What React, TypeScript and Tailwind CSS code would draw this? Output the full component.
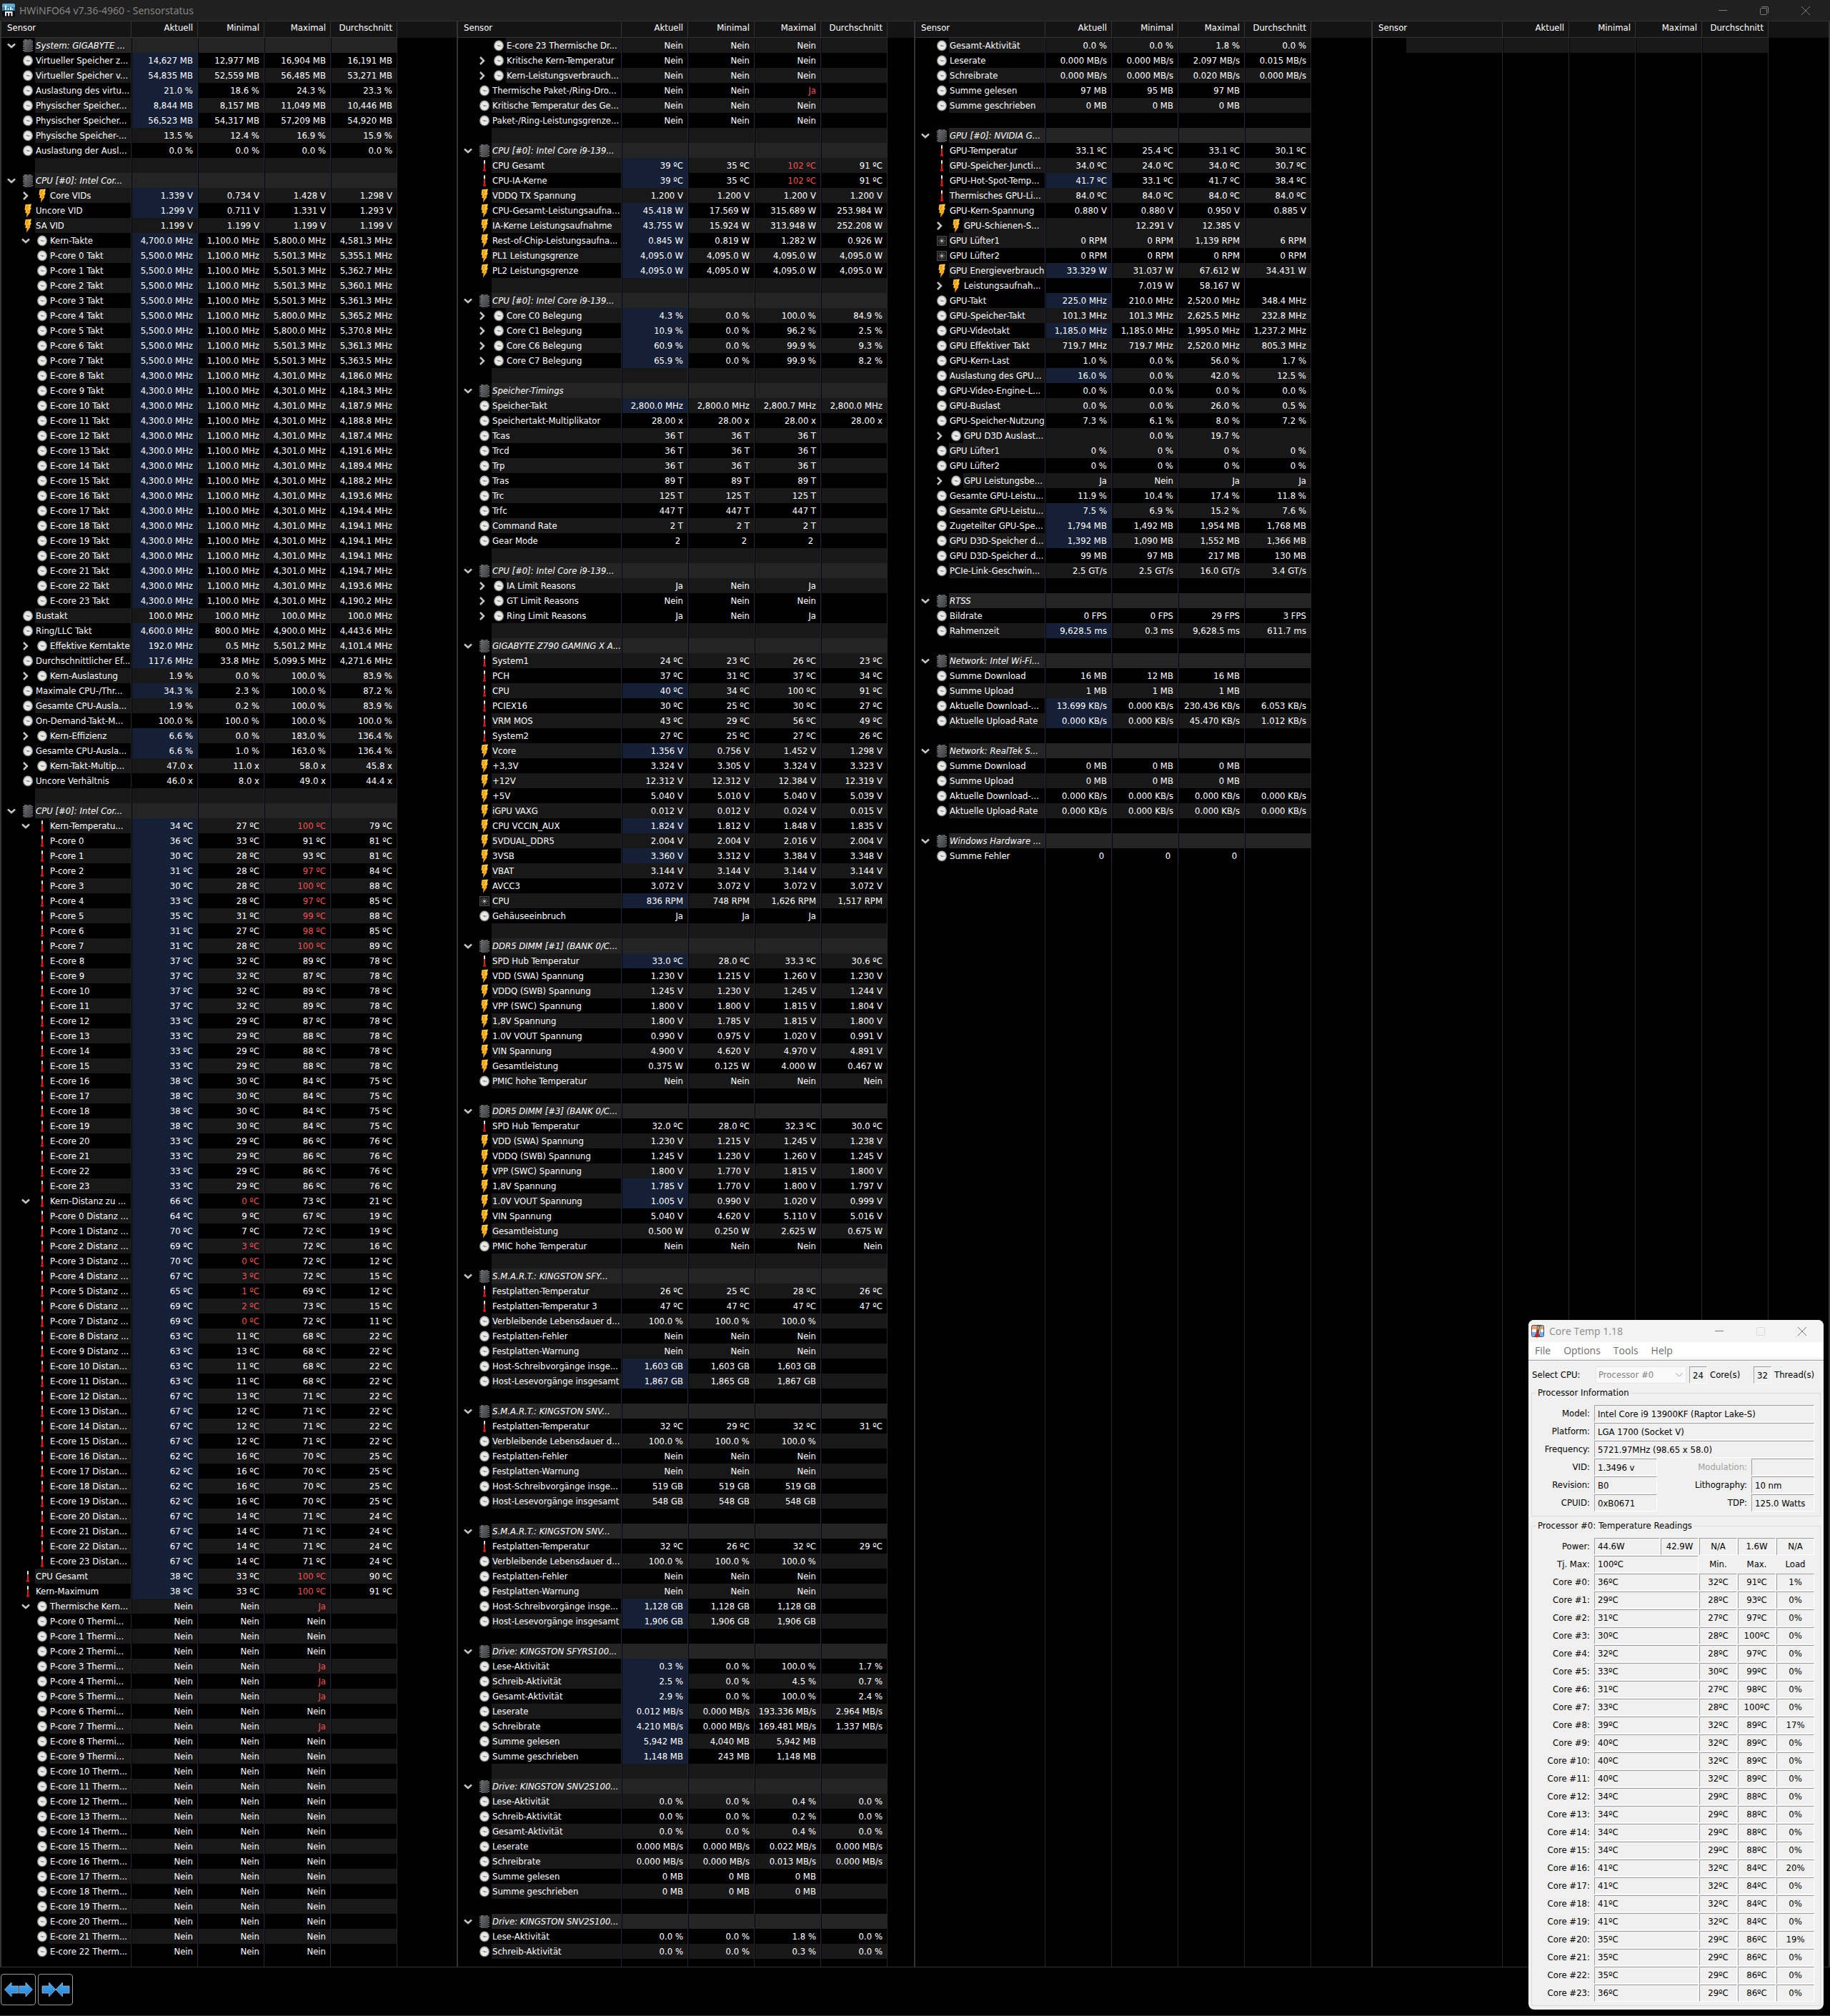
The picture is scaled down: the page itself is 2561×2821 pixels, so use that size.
import React from 'react';
import clsx from 'clsx';

type Kind = 'S' | 'C' | 'B' | 'T' | 'F';

interface Row {
  kind?: Kind;
  nested: boolean;
  expander?: 'open' | 'closed';
  label: string;
  values: string[];
  hot: boolean;
  shaded: boolean;
}

// One sensor per line: code | label | current | min | max | avg
// code: S section, C clock, B voltage/power, T temperature, F fan
//       1 = child, v = expanded child, > = collapsed child, = keeps the shade of the row above
// values: * marks a reading that just changed, ! a critical one
const COL_1 = `
S|System: GIGABYTE ...
C|Virtueller Speicher z...|*14,627 MB|12,977 MB|16,904 MB|16,191 MB
C|Virtueller Speicher v...|*54,835 MB|52,559 MB|56,485 MB|53,271 MB
C|Auslastung des virtu...|*21.0 %|18.6 %|24.3 %|23.3 %
C|Physischer Speicher...|*8,844 MB|8,157 MB|11,049 MB|10,446 MB
C|Physischer Speicher...|*56,523 MB|54,317 MB|57,209 MB|54,920 MB
C|Physische Speicher-...|13.5 %|12.4 %|16.9 %|15.9 %
C|Auslastung der Ausl...|0.0 %|0.0 %|0.0 %|0.0 %
-
S|CPU [#0]: Intel Cor...
>B|Core VIDs|*1.339 V|0.734 V|1.428 V|1.298 V
B|Uncore VID|*1.299 V|0.711 V|1.331 V|1.293 V
B|SA VID|1.199 V|1.199 V|1.199 V|1.199 V
vC|Kern-Takte|*4,700.0 MHz|1,100.0 MHz|5,800.0 MHz|4,581.3 MHz
1C|P-core 0 Takt|*5,500.0 MHz|1,100.0 MHz|5,501.3 MHz|5,355.1 MHz
1C|P-core 1 Takt|*5,500.0 MHz|1,100.0 MHz|5,501.3 MHz|5,362.7 MHz
1C|P-core 2 Takt|*5,500.0 MHz|1,100.0 MHz|5,501.3 MHz|5,360.1 MHz
1C|P-core 3 Takt|*5,500.0 MHz|1,100.0 MHz|5,501.3 MHz|5,361.3 MHz
1C|P-core 4 Takt|*5,500.0 MHz|1,100.0 MHz|5,800.0 MHz|5,365.2 MHz
1C|P-core 5 Takt|*5,500.0 MHz|1,100.0 MHz|5,800.0 MHz|5,370.8 MHz
1C|P-core 6 Takt|*5,500.0 MHz|1,100.0 MHz|5,501.3 MHz|5,361.3 MHz
1C|P-core 7 Takt|*5,500.0 MHz|1,100.0 MHz|5,501.3 MHz|5,363.5 MHz
1C|E-core 8 Takt|*4,300.0 MHz|1,100.0 MHz|4,301.0 MHz|4,186.0 MHz
1C|E-core 9 Takt|*4,300.0 MHz|1,100.0 MHz|4,301.0 MHz|4,184.3 MHz
1C|E-core 10 Takt|*4,300.0 MHz|1,100.0 MHz|4,301.0 MHz|4,187.9 MHz
1C|E-core 11 Takt|*4,300.0 MHz|1,100.0 MHz|4,301.0 MHz|4,188.8 MHz
1C|E-core 12 Takt|*4,300.0 MHz|1,100.0 MHz|4,301.0 MHz|4,187.4 MHz
1C|E-core 13 Takt|*4,300.0 MHz|1,100.0 MHz|4,301.0 MHz|4,191.6 MHz
1C|E-core 14 Takt|*4,300.0 MHz|1,100.0 MHz|4,301.0 MHz|4,189.4 MHz
1C|E-core 15 Takt|*4,300.0 MHz|1,100.0 MHz|4,301.0 MHz|4,188.2 MHz
1C|E-core 16 Takt|*4,300.0 MHz|1,100.0 MHz|4,301.0 MHz|4,193.6 MHz
1C|E-core 17 Takt|*4,300.0 MHz|1,100.0 MHz|4,301.0 MHz|4,194.4 MHz
1C|E-core 18 Takt|*4,300.0 MHz|1,100.0 MHz|4,301.0 MHz|4,194.1 MHz
1C|E-core 19 Takt|*4,300.0 MHz|1,100.0 MHz|4,301.0 MHz|4,194.1 MHz
1C|E-core 20 Takt|*4,300.0 MHz|1,100.0 MHz|4,301.0 MHz|4,194.1 MHz
1C|E-core 21 Takt|*4,300.0 MHz|1,100.0 MHz|4,301.0 MHz|4,194.7 MHz
1C|E-core 22 Takt|*4,300.0 MHz|1,100.0 MHz|4,301.0 MHz|4,193.6 MHz
1C|E-core 23 Takt|*4,300.0 MHz|1,100.0 MHz|4,301.0 MHz|4,190.2 MHz
C|Bustakt|100.0 MHz|100.0 MHz|100.0 MHz|100.0 MHz
C|Ring/LLC Takt|*4,600.0 MHz|800.0 MHz|4,900.0 MHz|4,443.6 MHz
>C|Effektive Kerntakte|*192.0 MHz|0.5 MHz|5,501.2 MHz|4,101.4 MHz
C|Durchschnittlicher Ef...|*117.6 MHz|33.8 MHz|5,099.5 MHz|4,271.6 MHz
>C|Kern-Auslastung|1.9 %|0.0 %|100.0 %|83.9 %
C|Maximale CPU-/Thr...|*34.3 %|2.3 %|100.0 %|87.2 %
C|Gesamte CPU-Ausla...|1.9 %|0.2 %|100.0 %|83.9 %
C|On-Demand-Takt-M...|100.0 %|100.0 %|100.0 %|100.0 %
>C|Kern-Effizienz|*6.6 %|0.0 %|183.0 %|136.4 %
C|Gesamte CPU-Ausla...|*6.6 %|1.0 %|163.0 %|136.4 %
>C|Kern-Takt-Multip...|47.0 x|11.0 x|58.0 x|45.8 x
C|Uncore Verhältnis|46.0 x|8.0 x|49.0 x|44.4 x
-
S|CPU [#0]: Intel Cor...
vT|Kern-Temperatu...|*34 ºC|27 ºC|!100 ºC|79 ºC
1T|P-core 0|*36 ºC|33 ºC|91 ºC|81 ºC
1T|P-core 1|*30 ºC|28 ºC|93 ºC|81 ºC
1T|P-core 2|*31 ºC|28 ºC|!97 ºC|84 ºC
1T|P-core 3|*30 ºC|28 ºC|!100 ºC|88 ºC
1T|P-core 4|*33 ºC|28 ºC|!97 ºC|85 ºC
1T|P-core 5|*35 ºC|31 ºC|!99 ºC|88 ºC
1T|P-core 6|*31 ºC|27 ºC|!98 ºC|85 ºC
1T|P-core 7|*31 ºC|28 ºC|!100 ºC|89 ºC
1T|E-core 8|*37 ºC|32 ºC|89 ºC|78 ºC
1T|E-core 9|*37 ºC|32 ºC|87 ºC|78 ºC
1T|E-core 10|*37 ºC|32 ºC|89 ºC|78 ºC
1T|E-core 11|*37 ºC|32 ºC|89 ºC|78 ºC
1T|E-core 12|*33 ºC|29 ºC|87 ºC|78 ºC
1T|E-core 13|*33 ºC|29 ºC|88 ºC|78 ºC
1T|E-core 14|*33 ºC|29 ºC|88 ºC|78 ºC
1T|E-core 15|*33 ºC|29 ºC|88 ºC|78 ºC
1T|E-core 16|*38 ºC|30 ºC|84 ºC|75 ºC
1T|E-core 17|*38 ºC|30 ºC|84 ºC|75 ºC
1T|E-core 18|*38 ºC|30 ºC|84 ºC|75 ºC
1T|E-core 19|*38 ºC|30 ºC|84 ºC|75 ºC
1T|E-core 20|*33 ºC|29 ºC|86 ºC|76 ºC
1T|E-core 21|*33 ºC|29 ºC|86 ºC|76 ºC
1T|E-core 22|*33 ºC|29 ºC|86 ºC|76 ºC
1T|E-core 23|*33 ºC|29 ºC|86 ºC|76 ºC
vT|Kern-Distanz zu ...|*66 ºC|!0 ºC|73 ºC|21 ºC
1T|P-core 0 Distanz ...|*64 ºC|9 ºC|67 ºC|19 ºC
1T|P-core 1 Distanz ...|*70 ºC|7 ºC|72 ºC|19 ºC
1T|P-core 2 Distanz ...|*69 ºC|!3 ºC|72 ºC|16 ºC
1T|P-core 3 Distanz ...|*70 ºC|!0 ºC|72 ºC|12 ºC
1T|P-core 4 Distanz ...|*67 ºC|!3 ºC|72 ºC|15 ºC
1T|P-core 5 Distanz ...|*65 ºC|!1 ºC|69 ºC|12 ºC
1T|P-core 6 Distanz ...|*69 ºC|!2 ºC|73 ºC|15 ºC
1T|P-core 7 Distanz ...|*69 ºC|!0 ºC|72 ºC|11 ºC
1T|E-core 8 Distanz ...|*63 ºC|11 ºC|68 ºC|22 ºC
1T|E-core 9 Distanz ...|*63 ºC|13 ºC|68 ºC|22 ºC
1T|E-core 10 Distan...|*63 ºC|11 ºC|68 ºC|22 ºC
1T|E-core 11 Distan...|*63 ºC|11 ºC|68 ºC|22 ºC
1T|E-core 12 Distan...|*67 ºC|13 ºC|71 ºC|22 ºC
1T|E-core 13 Distan...|*67 ºC|12 ºC|71 ºC|22 ºC
1T|E-core 14 Distan...|*67 ºC|12 ºC|71 ºC|22 ºC
1T|E-core 15 Distan...|*67 ºC|12 ºC|71 ºC|22 ºC
1T|E-core 16 Distan...|*62 ºC|16 ºC|70 ºC|25 ºC
1T|E-core 17 Distan...|*62 ºC|16 ºC|70 ºC|25 ºC
1T|E-core 18 Distan...|*62 ºC|16 ºC|70 ºC|25 ºC
1T|E-core 19 Distan...|*62 ºC|16 ºC|70 ºC|25 ºC
1T|E-core 20 Distan...|*67 ºC|14 ºC|71 ºC|24 ºC
1T|E-core 21 Distan...|*67 ºC|14 ºC|71 ºC|24 ºC
1T|E-core 22 Distan...|*67 ºC|14 ºC|71 ºC|24 ºC
1T|E-core 23 Distan...|*67 ºC|14 ºC|71 ºC|24 ºC
T|CPU Gesamt|*38 ºC|33 ºC|!100 ºC|90 ºC
T|Kern-Maximum|*38 ºC|33 ºC|!100 ºC|91 ºC
vC|Thermische Kern...|Nein|Nein|!Ja
1C|P-core 0 Thermi...|Nein|Nein|Nein
1C|P-core 1 Thermi...|Nein|Nein|Nein
1C|P-core 2 Thermi...|Nein|Nein|Nein
1C|P-core 3 Thermi...|Nein|Nein|!Ja
1C|P-core 4 Thermi...|Nein|Nein|!Ja
1C|P-core 5 Thermi...|Nein|Nein|!Ja
1C|P-core 6 Thermi...|Nein|Nein|Nein
1C|P-core 7 Thermi...|Nein|Nein|!Ja
1C|E-core 8 Thermi...|Nein|Nein|Nein
1C|E-core 9 Thermi...|Nein|Nein|Nein
1C|E-core 10 Therm...|Nein|Nein|Nein
1C|E-core 11 Therm...|Nein|Nein|Nein
1C|E-core 12 Therm...|Nein|Nein|Nein
1C|E-core 13 Therm...|Nein|Nein|Nein
1C|E-core 14 Therm...|Nein|Nein|Nein
1C|E-core 15 Therm...|Nein|Nein|Nein
1C|E-core 16 Therm...|Nein|Nein|Nein
1C|E-core 17 Therm...|Nein|Nein|Nein
1C|E-core 18 Therm...|Nein|Nein|Nein
1C|E-core 19 Therm...|Nein|Nein|Nein
1C|E-core 20 Therm...|Nein|Nein|Nein
1C|E-core 21 Therm...|Nein|Nein|Nein
1C|E-core 22 Therm...|Nein|Nein|Nein
`;

const COL_2 = `
1C|E-core 23 Thermische Dr...|Nein|Nein|Nein
>C|Kritische Kern-Temperatur|Nein|Nein|Nein
>C|Kern-Leistungsverbrauch...|Nein|Nein|Nein
C|Thermische Paket-/Ring-Dro...|Nein|Nein|!Ja
C|Kritische Temperatur des Ge...|Nein|Nein|Nein
C|Paket-/Ring-Leistungsgrenze...|Nein|Nein|Nein
-
S|CPU [#0]: Intel Core i9-139...
T|CPU Gesamt|*39 ºC|35 ºC|!102 ºC|91 ºC
T|CPU-IA-Kerne|*39 ºC|35 ºC|!102 ºC|91 ºC
B|VDDQ TX Spannung|1.200 V|1.200 V|1.200 V|1.200 V
B|CPU-Gesamt-Leistungsaufna...|*45.418 W|17.569 W|315.689 W|253.984 W
B|IA-Kerne Leistungsaufnahme|*43.755 W|15.924 W|313.948 W|252.208 W
B|Rest-of-Chip-Leistungsaufna...|*0.845 W|0.819 W|1.282 W|0.926 W
B|PL1 Leistungsgrenze|*4,095.0 W|4,095.0 W|4,095.0 W|4,095.0 W
B|PL2 Leistungsgrenze|*4,095.0 W|4,095.0 W|4,095.0 W|4,095.0 W
-
S|CPU [#0]: Intel Core i9-139...
>C|Core C0 Belegung|*4.3 %|0.0 %|100.0 %|84.9 %
>C|Core C1 Belegung|*10.9 %|0.0 %|96.2 %|2.5 %
>C|Core C6 Belegung|*60.9 %|0.0 %|99.9 %|9.3 %
>C|Core C7 Belegung|*65.9 %|0.0 %|99.9 %|8.2 %
-
S|Speicher-Timings
C|Speicher-Takt|*2,800.0 MHz|2,800.0 MHz|2,800.7 MHz|2,800.0 MHz
C|Speichertakt-Multiplikator|28.00 x|28.00 x|28.00 x|28.00 x
C|Tcas|36 T|36 T|36 T
C|Trcd|36 T|36 T|36 T
C|Trp|36 T|36 T|36 T
C|Tras|89 T|89 T|89 T
C|Trc|125 T|125 T|125 T
C|Trfc|447 T|447 T|447 T
C|Command Rate|2 T|2 T|2 T
C|Gear Mode|2 |2 |2 
-
S|CPU [#0]: Intel Core i9-139...
>C|IA Limit Reasons|Ja|Nein|Ja
>C|GT Limit Reasons|Nein|Nein|Nein
=>C|Ring Limit Reasons|Ja|Nein|Ja
-
S|GIGABYTE Z790 GAMING X A...
T|System1|24 ºC|23 ºC|26 ºC|23 ºC
T|PCH|37 ºC|31 ºC|37 ºC|34 ºC
T|CPU|*40 ºC|34 ºC|100 ºC|91 ºC
T|PCIEX16|30 ºC|25 ºC|30 ºC|27 ºC
T|VRM MOS|43 ºC|29 ºC|56 ºC|49 ºC
T|System2|27 ºC|25 ºC|27 ºC|26 ºC
B|Vcore|*1.356 V|0.756 V|1.452 V|1.298 V
B|+3,3V|3.324 V|3.305 V|3.324 V|3.323 V
B|+12V|12.312 V|12.312 V|12.384 V|12.319 V
B|+5V|5.040 V|5.010 V|5.040 V|5.039 V
B|iGPU VAXG|0.012 V|0.012 V|0.024 V|0.015 V
B|CPU VCCIN_AUX|*1.824 V|1.812 V|1.848 V|1.835 V
B|5VDUAL_DDR5|2.004 V|2.004 V|2.016 V|2.004 V
B|3VSB|*3.360 V|3.312 V|3.384 V|3.348 V
B|VBAT|3.144 V|3.144 V|3.144 V|3.144 V
B|AVCC3|3.072 V|3.072 V|3.072 V|3.072 V
F|CPU|*836 RPM|748 RPM|1,626 RPM|1,517 RPM
C|Gehäuseeinbruch|Ja|Ja|Ja
-
S|DDR5 DIMM [#1] (BANK 0/C...
T|SPD Hub Temperatur|*33.0 ºC|28.0 ºC|33.3 ºC|30.6 ºC
B|VDD (SWA) Spannung|1.230 V|1.215 V|1.260 V|1.230 V
B|VDDQ (SWB) Spannung|1.245 V|1.230 V|1.245 V|1.244 V
B|VPP (SWC) Spannung|1.800 V|1.800 V|1.815 V|1.804 V
B|1,8V Spannung|1.800 V|1.785 V|1.815 V|1.800 V
B|1.0V VOUT Spannung|0.990 V|0.975 V|1.020 V|0.991 V
B|VIN Spannung|4.900 V|4.620 V|4.970 V|4.891 V
B|Gesamtleistung|0.375 W|0.125 W|4.000 W|0.467 W
C|PMIC hohe Temperatur|Nein|Nein|Nein|Nein
-
S|DDR5 DIMM [#3] (BANK 0/C...
T|SPD Hub Temperatur|32.0 ºC|28.0 ºC|32.3 ºC|30.0 ºC
B|VDD (SWA) Spannung|1.230 V|1.215 V|1.245 V|1.238 V
B|VDDQ (SWB) Spannung|1.245 V|1.230 V|1.260 V|1.245 V
B|VPP (SWC) Spannung|1.800 V|1.770 V|1.815 V|1.800 V
B|1,8V Spannung|*1.785 V|1.770 V|1.800 V|1.797 V
B|1.0V VOUT Spannung|*1.005 V|0.990 V|1.020 V|0.999 V
B|VIN Spannung|5.040 V|4.620 V|5.110 V|5.016 V
B|Gesamtleistung|0.500 W|0.250 W|2.625 W|0.675 W
C|PMIC hohe Temperatur|Nein|Nein|Nein|Nein
-
S|S.M.A.R.T.: KINGSTON SFY...
T|Festplatten-Temperatur|26 ºC|25 ºC|28 ºC|26 ºC
T|Festplatten-Temperatur 3|47 ºC|47 ºC|47 ºC|47 ºC
C|Verbleibende Lebensdauer d...|100.0 %|100.0 %|100.0 %
C|Festplatten-Fehler|Nein|Nein|Nein
C|Festplatten-Warnung|Nein|Nein|Nein
C|Host-Schreibvorgänge insge...|*1,603 GB|1,603 GB|1,603 GB
C|Host-Lesevorgänge insgesamt|*1,867 GB|1,865 GB|1,867 GB
-
S|S.M.A.R.T.: KINGSTON SNV...
T|Festplatten-Temperatur|32 ºC|29 ºC|32 ºC|31 ºC
C|Verbleibende Lebensdauer d...|100.0 %|100.0 %|100.0 %
C|Festplatten-Fehler|Nein|Nein|Nein
C|Festplatten-Warnung|Nein|Nein|Nein
C|Host-Schreibvorgänge insge...|519 GB|519 GB|519 GB
C|Host-Lesevorgänge insgesamt|548 GB|548 GB|548 GB
-
S|S.M.A.R.T.: KINGSTON SNV...
T|Festplatten-Temperatur|32 ºC|26 ºC|32 ºC|29 ºC
C|Verbleibende Lebensdauer d...|100.0 %|100.0 %|100.0 %
C|Festplatten-Fehler|Nein|Nein|Nein
C|Festplatten-Warnung|Nein|Nein|Nein
C|Host-Schreibvorgänge insge...|*1,128 GB|1,128 GB|1,128 GB
C|Host-Lesevorgänge insgesamt|*1,906 GB|1,906 GB|1,906 GB
-
S|Drive: KINGSTON SFYRS100...
C|Lese-Aktivität|*0.3 %|0.0 %|100.0 %|1.7 %
C|Schreib-Aktivität|*2.5 %|0.0 %|4.5 %|0.7 %
C|Gesamt-Aktivität|*2.9 %|0.0 %|100.0 %|2.4 %
C|Leserate|*0.012 MB/s|0.000 MB/s|193.336 MB/s|2.964 MB/s
C|Schreibrate|*4.210 MB/s|0.000 MB/s|169.481 MB/s|1.337 MB/s
C|Summe gelesen|*5,942 MB|4,040 MB|5,942 MB
C|Summe geschrieben|*1,148 MB|243 MB|1,148 MB
-
S|Drive: KINGSTON SNV2S100...
C|Lese-Aktivität|0.0 %|0.0 %|0.4 %|0.0 %
C|Schreib-Aktivität|0.0 %|0.0 %|0.2 %|0.0 %
C|Gesamt-Aktivität|0.0 %|0.0 %|0.4 %|0.0 %
C|Leserate|0.000 MB/s|0.000 MB/s|0.022 MB/s|0.000 MB/s
C|Schreibrate|0.000 MB/s|0.000 MB/s|0.013 MB/s|0.000 MB/s
C|Summe gelesen|0 MB|0 MB|0 MB
C|Summe geschrieben|0 MB|0 MB|0 MB
-
S|Drive: KINGSTON SNV2S100...
C|Lese-Aktivität|0.0 %|0.0 %|1.8 %|0.0 %
C|Schreib-Aktivität|0.0 %|0.0 %|0.3 %|0.0 %
`;

const COL_3 = `
C|Gesamt-Aktivität|0.0 %|0.0 %|1.8 %|0.0 %
C|Leserate|0.000 MB/s|0.000 MB/s|2.097 MB/s|0.015 MB/s
C|Schreibrate|0.000 MB/s|0.000 MB/s|0.020 MB/s|0.000 MB/s
C|Summe gelesen|97 MB|95 MB|97 MB
C|Summe geschrieben|0 MB|0 MB|0 MB
-
S|GPU [#0]: NVIDIA G...
T|GPU-Temperatur|33.1 ºC|25.4 ºC|33.1 ºC|30.1 ºC
T|GPU-Speicher-Juncti...|34.0 ºC|24.0 ºC|34.0 ºC|30.7 ºC
T|GPU-Hot-Spot-Temp...|*41.7 ºC|33.1 ºC|41.7 ºC|38.4 ºC
T|Thermisches GPU-Li...|84.0 ºC|84.0 ºC|84.0 ºC|84.0 ºC
B|GPU-Kern-Spannung|0.880 V|0.880 V|0.950 V|0.885 V
>B|GPU-Schienen-S...||12.291 V|12.385 V
=F|GPU Lüfter1|0 RPM|0 RPM|1,139 RPM|6 RPM
F|GPU Lüfter2|0 RPM|0 RPM|0 RPM|0 RPM
B|GPU Energieverbrauch|*33.329 W|31.037 W|67.612 W|34.431 W
>B|Leistungsaufnah...||7.019 W|58.167 W
=C|GPU-Takt|*225.0 MHz|210.0 MHz|2,520.0 MHz|348.4 MHz
C|GPU-Speicher-Takt|101.3 MHz|101.3 MHz|2,625.5 MHz|232.8 MHz
C|GPU-Videotakt|*1,185.0 MHz|1,185.0 MHz|1,995.0 MHz|1,237.2 MHz
C|GPU Effektiver Takt|719.7 MHz|719.7 MHz|2,520.0 MHz|805.3 MHz
C|GPU-Kern-Last|1.0 %|0.0 %|56.0 %|1.7 %
C|Auslastung des GPU...|*16.0 %|0.0 %|42.0 %|12.5 %
C|GPU-Video-Engine-L...|0.0 %|0.0 %|0.0 %|0.0 %
C|GPU-Buslast|0.0 %|0.0 %|26.0 %|0.5 %
C|GPU-Speicher-Nutzung|7.3 %|6.1 %|8.0 %|7.2 %
>C|GPU D3D Auslast...||0.0 %|19.7 %
=C|GPU Lüfter1|0 %|0 %|0 %|0 %
C|GPU Lüfter2|0 %|0 %|0 %|0 %
>C|GPU Leistungsbe...|Ja|Nein|Ja|Ja
C|Gesamte GPU-Leistu...|11.9 %|10.4 %|17.4 %|11.8 %
C|Gesamte GPU-Leistu...|*7.5 %|6.9 %|15.2 %|7.6 %
C|Zugeteilter GPU-Spe...|*1,794 MB|1,492 MB|1,954 MB|1,768 MB
C|GPU D3D-Speicher d...|*1,392 MB|1,090 MB|1,552 MB|1,366 MB
C|GPU D3D-Speicher d...|99 MB|97 MB|217 MB|130 MB
C|PCIe-Link-Geschwin...|2.5 GT/s|2.5 GT/s|16.0 GT/s|3.4 GT/s
-
S|RTSS
C|Bildrate|0 FPS|0 FPS|29 FPS|3 FPS
C|Rahmenzeit|*9,628.5 ms|0.3 ms|9,628.5 ms|611.7 ms
-
S|Network: Intel Wi-Fi...
C|Summe Download|16 MB|12 MB|16 MB
C|Summe Upload|1 MB|1 MB|1 MB
C|Aktuelle Download-...|*13.699 KB/s|0.000 KB/s|230.436 KB/s|6.053 KB/s
C|Aktuelle Upload-Rate|*0.000 KB/s|0.000 KB/s|45.470 KB/s|1.012 KB/s
-
S|Network: RealTek S...
C|Summe Download|0 MB|0 MB|0 MB
C|Summe Upload|0 MB|0 MB|0 MB
C|Aktuelle Download-...|0.000 KB/s|0.000 KB/s|0.000 KB/s|0.000 KB/s
C|Aktuelle Upload-Rate|0.000 KB/s|0.000 KB/s|0.000 KB/s|0.000 KB/s
-
S|Windows Hardware ...
C|Summe Fehler|0 |0 |0 
`;

const COL_4 = `
-
`;

const parse = (src: string): Row[] => {
  let shaded = false;
  return src.split('\n').filter(Boolean).map((line) => {
    const [code, label = '', ...cells] = line.split('|');
    if (!code.startsWith('=')) shaded = !shaded;
    const kind = 'SCBTF'.includes(code.slice(-1)) ? (code.slice(-1) as Kind) : undefined;
    const expander = kind === 'S' || code.includes('v') ? 'open' : code.includes('>') ? 'closed' : undefined;
    return {
      kind,
      nested: /[1v>]/.test(code),
      expander,
      label,
      values: [0, 1, 2, 3].map((i) => cells[i] ?? ''),
      hot: (cells[0] ?? '').startsWith('*'),
      shaded,
    };
  });
};

/* ---------- icons ---------- */

const IconDefs = () => (
  <svg className="absolute size-0" aria-hidden="true">
    <defs>
      <linearGradient id="rim" x1="0" y1="0" x2="0" y2="1">
        <stop offset="0" stopColor="#b9b9b9" />
        <stop offset="1" stopColor="#6a6a6a" />
      </linearGradient>
      <linearGradient id="chip" x1="0" y1="0" x2="1" y2="1">
        <stop offset="0" stopColor="#6b6c6e" />
        <stop offset="1" stopColor="#3e3f42" />
      </linearGradient>
      <linearGradient id="bolt" x1="0" y1="0" x2="0" y2="1">
        <stop offset="0" stopColor="#ffd23c" />
        <stop offset="0.5" stopColor="#ffc22a" />
        <stop offset="1" stopColor="#f08a12" />
      </linearGradient>
      <linearGradient id="arrow" x1="0" y1="0" x2="0" y2="1">
        <stop offset="0" stopColor="#4aa6ee" />
        <stop offset="1" stopColor="#2484da" />
      </linearGradient>
    </defs>
  </svg>
);

const RowIcon = ({ kind }: { kind: Kind }) => {
  if (kind === 'S') {
    return (
      <svg width="14" height="18" viewBox="0 0 14 18" className="shrink-0">
        <path d="M1 2v15M13 2v15" stroke="#8f9092" strokeWidth="2" strokeDasharray="1.2 1.4" />
        <rect x="2" y="0" width="10" height="18" fill="url(#chip)" />
        <path d="M5.5 0h3v1.200h-3z" fill="#2c2d2f" />
      </svg>
    );
  }
  if (kind === 'B') {
    return (
      <svg width="14" height="20" viewBox="0 0 14 20" className="shrink-0">
        <path d="M3.500 1.200 12 .5 10.500 6l1.500-.2-2.500 5.500 1.300-.1L5 19.500l.5-6.500-2.200.3.7-4.500-1.500.2z" fill="url(#bolt)" />
        <path d="M4.800 2.500 9 2.200 6.500 8 4 8.500zM6 9l3.500-.8L7.500 13 6.300 12z" fill="#ee8416" opacity=".7" />
      </svg>
    );
  }
  if (kind === 'T') {
    return (
      <svg width="14" height="18" viewBox="0 0 14 18" className="shrink-0">
        <rect x="6" y="1" width="2" height="14" rx="1" fill="#ece6e6" />
        <path d="M6 6h2v9H6z" fill="#d62a2a" />
        <rect x="5" y="13" width="4" height="4" rx="1.500" fill="#e00c0c" />
      </svg>
    );
  }
  if (kind === 'F') {
    return (
      <svg width="14" height="14" viewBox="0 0 14 14" className="shrink-0">
        <rect x=".5" y=".5" width="13" height="13" fill="#1f1f1f" stroke="#4a4a4a" />
        <path d="M7 2v10M2 7h10M3.500 3.500l7 7M10.500 3.500l-7 7" stroke="#777" strokeWidth="1" />
        <circle cx="7" cy="7" r="1.500" fill="#d9bdbd" />
      </svg>
    );
  }
  return (
    <svg width="14" height="16" viewBox="0 0 14 16" className="shrink-0">
      <ellipse cx="7" cy="8" rx="7" ry="7.500" fill="url(#rim)" />
      <ellipse cx="7" cy="8.300" rx="5.600" ry="6" fill="#e9e9e7" />
      <path d="M4.500 7 7 8.200h3.500" fill="none" stroke="#8d8780" strokeWidth="1" />
      <path d="M6.500 7.500h1.200v1.200H6.500z" fill="#6b4a3c" />
    </svg>
  );
};

const Expander = ({ state }: { state: 'open' | 'closed' }) => (
  <button type="button" aria-label={state === 'open' ? 'Zuklappen' : 'Aufklappen'} className="flex w-3 shrink-0 justify-center">
    <svg width="12" height="12" viewBox="0 0 12 12" fill="none" stroke="#c4c4c4" strokeWidth="2.500">
      {state === 'open' ? <path d="M1 3.500 6 8 11 3.500" /> : <path d="M3 1 8 6 3 11" />}
    </svg>
  </button>
);

const HwinfoIcon = () => (
  <svg width="18" height="19" viewBox="0 0 18 19">
    <rect width="18" height="19" rx="2.500" fill="#0b0d10" />
    <path d="M0 2.500A2.500 2.500 0 0 1 2.500 0h13A2.500 2.500 0 0 1 18 2.500V10H0z" fill="#2f80ae" />
    <path d="M0 2.500A2.500 2.500 0 0 1 2.500 0h13A2.500 2.500 0 0 1 18 2.500V5H0z" fill="#63abce" />
    <path d="M5 2.500V9M8.500 6.500V9M12 5v4M14.500 7v2" stroke="#fff" strokeWidth="1.800" />
    <path d="M4 12h10.500M5 12v5.500M9.200 12v5.500M13.500 12v5.500" stroke="#f2f2f2" strokeWidth="2" />
  </svg>
);

const CoreTempIcon = () => (
  <svg width="18" height="20" viewBox="0 0 18 20">
    <rect x=".5" y="1.500" width="17" height="16" rx="2" fill="#f3a171" stroke="#39506e" />
    <path d="M1 9h16v6.500a1.500 1.500 0 0 1-1.500 1.500h-13A1.500 1.500 0 0 1 1 15.500z" fill="#7fb0ee" />
    <path d="M1 7h16v4H1z" fill="#f7f2ee" />
    <path d="M9.500 2 7.500 16M12.500 2 10.500 16" stroke="#40583a" strokeWidth="2.500" strokeLinecap="round" />
    <path d="M9.500 3 8.500 12M12.500 3 11 14" stroke="#dfeeda" strokeWidth="1" />
    <path d="M9.500 7 8 16" stroke="#e01515" strokeWidth="2" />
    <circle cx="7.500" cy="16" r="2.500" fill="#e01515" />
  </svg>
);

/* ---------- sensor columns ---------- */

const HEADERS = ['Aktuell', 'Minimal', 'Maximal', 'Durchschnitt'];

const SensorPanel = ({ rows, wide, first }: { rows: Row[]; wide?: boolean; first?: boolean }) => {
  const nameCol = wide ? 'w-[229px]' : 'w-[182px]';
  return (
    <section className={clsx('flex flex-col border-r border-[#333] bg-black', first ? 'border-l-2' : 'border-l')}>
      <div className="flex">
        <table className={clsx('shrink-0 table-fixed border-separate border-spacing-0', wide ? 'w-[601px]' : 'w-[554px]')}>
          <colgroup>
            <col className={nameCol} />
            {HEADERS.map((h) => <col key={h} className="w-[93px]" />)}
          </colgroup>
          <thead>
            <tr className="h-[23px] bg-[#141414]">
              <th className="border-r border-b border-[#333] pb-1 pl-2 text-left font-normal">Sensor</th>
              {HEADERS.map((h) => (
                <th key={h} className="border-r border-b border-[#333] pr-1.5 pb-1 text-right font-normal">{h}</th>
              ))}
            </tr>
          </thead>
          <tbody>
            {rows.map((row, i) => {
              const bg = row.kind === 'S' ? 'bg-[#242424]' : row.shaded ? 'bg-[#181818]' : 'bg-black';
              return (
                <tr key={i} className="h-[21px]">
                  <td className="border-r border-[#23262a] p-0">
                    <div className="flex h-[21px]">
                      <div className={clsx('flex shrink-0 items-center justify-end gap-2.5 pr-[3px]', row.nested ? 'w-[67px]' : 'w-[47px]')}>
                        {row.expander && <Expander state={row.expander} />}
                        {row.kind && <RowIcon kind={row.kind} />}
                      </div>
                      <div className={clsx('min-w-0 flex-1 overflow-hidden pl-px leading-[21px] whitespace-nowrap', bg, row.kind === 'S' && 'italic')}>
                        {row.label}
                      </div>
                    </div>
                  </td>
                  {row.values.map((v, c) => (
                    <td
                      key={c}
                      className={clsx(
                        'border-r border-l border-r-[#23262a] border-l-[#030912] py-0 pr-1.5 pl-0 text-right leading-[21px] whitespace-pre',
                        c === 0 && row.hot ? 'bg-[#152037]' : bg,
                        v.startsWith('!') && 'text-[#f25252]',
                      )}
                    >
                      {v.replace(/^[*!]/, '')}
                    </td>
                  ))}
                </tr>
              );
            })}
          </tbody>
        </table>
        <div className="h-[23px] flex-1 bg-[#141414]" />
      </div>
      {/* grid lines run on below the last row */}
      <div className="flex min-h-[11px] flex-1">
        <div className={clsx('shrink-0 border-r border-[#23262a]', nameCol)} />
        {HEADERS.map((h) => <div key={h} className="w-[93px] shrink-0 border-r border-[#23262a]" />)}
      </div>
    </section>
  );
};

/* ---------- Core Temp ---------- */

const sunken = 'border border-t-[#a0a0a0] border-l-[#a0a0a0] border-r-white border-b-white bg-[#f0f0f0]';

const Field = ({ id, label, value, half, muted }: { id: string; label: string; value: string; half?: boolean; muted?: boolean }) => (
  <>
    <label htmlFor={id} className={clsx('pr-1.5 text-right', muted && 'text-[#a0a0a0]')}>{label}</label>
    <input id={id} readOnly value={value} className={clsx('h-6 min-w-0 px-1', sunken, half ? '' : 'col-span-3')} />
  </>
);

const READINGS: [string, string, string, string][] = [
  ['36', '32', '91', '1'], ['29', '28', '93', '0'], ['31', '27', '97', '0'], ['30', '28', '100', '0'],
  ['32', '28', '97', '0'], ['33', '30', '99', '0'], ['31', '27', '98', '0'], ['33', '28', '100', '0'],
  ['39', '32', '89', '17'], ['40', '32', '89', '0'], ['40', '32', '89', '0'], ['40', '32', '89', '0'],
  ['34', '29', '88', '0'], ['34', '29', '88', '0'], ['34', '29', '88', '0'], ['34', '29', '88', '0'],
  ['41', '32', '84', '20'], ['41', '32', '84', '0'], ['41', '32', '84', '0'], ['41', '32', '84', '0'],
  ['35', '29', '86', '19'], ['35', '29', '86', '0'], ['35', '29', '86', '0'], ['36', '29', '86', '0'],
];

const CoreTemp = () => (
  <section className="absolute right-[9px] bottom-[9px] w-[413px] overflow-hidden rounded-lg bg-[#f0f0f0] pb-[5px] text-black">
    <header className="flex h-[31px] items-center bg-[#f3f3f3] pl-1 font-['Open_Sans',sans-serif] text-[14px] text-[#8a8a8a]">
      <CoreTempIcon />
      <h2 className="flex-1 pl-[7px]">Core Temp 1.18</h2>
      <div className="flex pr-px">
        <button type="button" aria-label="Minimize" className="flex w-[58px] justify-center">
          <svg width="12" height="12" viewBox="0 0 12 12" stroke="#777"><path d="M0 5.500h12" /></svg>
        </button>
        <button type="button" aria-label="Maximize" disabled className="flex w-[58px] justify-center">
          <svg width="12" height="12" viewBox="0 0 12 12" fill="none" stroke="#d9d9d9"><rect x=".5" y=".5" width="11" height="11" rx="1" /></svg>
        </button>
        <button type="button" aria-label="Close" className="flex w-[58px] justify-center">
          <svg width="12" height="12" viewBox="0 0 12 12" stroke="#777"><path d="M0 0 12 12M12 0 0 12" /></svg>
        </button>
      </div>
    </header>
    <nav className="flex h-[23px] items-center gap-[18px] bg-white pl-[9px] font-['Open_Sans',sans-serif] text-[14px] text-[#6d6d6d]">
      {['File', 'Options', 'Tools', 'Help'].map((m) => <button key={m} type="button">{m}</button>)}
    </nav>
    <div className="mt-0.5 border-t border-b border-t-[#a0a0a0] border-b-white" />

    <div className="mt-[7px] flex h-6 items-center pl-[5px]">
      <label htmlFor="cpu" className="w-[89px] shrink-0">Select CPU:</label>
      <div className="relative w-[127px] shrink-0">
        <select id="cpu" disabled className="h-6 w-full appearance-none rounded-xs border border-[#e6e6e6] bg-[#f9f9f9] pl-[3px] text-[#838383] opacity-100">
          <option>Processor #0</option>
        </select>
        <svg width="10" height="6" viewBox="0 0 10 6" fill="none" stroke="#a0a0a0" className="absolute top-[9px] right-[5px]"><path d="M.5.5 5 5 9.500.5" /></svg>
      </div>
      <input id="cores" readOnly value="24" className={clsx('ml-1 h-6 w-[25px] text-center', sunken)} />
      <label htmlFor="cores" className="w-[65px] pl-1">Core(s)</label>
      <input id="threads" readOnly value="32" className={clsx('h-6 w-[25px] text-center', sunken)} />
      <label htmlFor="threads" className="pl-1">Thread(s)</label>
    </div>

    <fieldset className="mx-1 mt-[5px] border border-[#dcdcdc] px-[7px] pt-[9px] pb-1.5">
      <legend className="-ml-px px-0.5 leading-4">Processor Information</legend>
      <div className="grid grid-cols-[80px_88px_1fr_88px] items-center gap-y-px pr-px">
        <Field id="model" label="Model:" value="Intel Core i9 13900KF (Raptor Lake-S)" />
        <Field id="platform" label="Platform:" value="LGA 1700 (Socket V)" />
        <Field id="frequency" label="Frequency:" value="5721.97MHz (98.65 x 58.0)" />
        <Field id="vid" label="VID:" value="1.3496 v" half />
        <Field id="modulation" label="Modulation:" value="" half muted />
        <Field id="revision" label="Revision:" value="B0" half />
        <Field id="lithography" label="Lithography:" value="10 nm" half />
        <Field id="cpuid" label="CPUID:" value="0xB0671" half />
        <Field id="tdp" label="TDP:" value="125.0 Watts" half />
      </div>
    </fieldset>

    <fieldset className="mx-1 mt-[5px] border border-[#dcdcdc] px-[7px] pt-2 pb-1">
      <legend className="-ml-px px-0.5 leading-4">Processor #0: Temperature Readings</legend>
      <table className="w-full table-fixed border-separate border-spacing-px">
        <colgroup>
          <col />
          <col className="w-[92px]" />
          <col className="w-[53px]" />
          <col className="w-[53px]" />
          <col className="w-[53px]" />
          <col className="w-[53px]" />
        </colgroup>
        <tbody>
          <tr className="h-6">
            <th scope="row" className="py-0 pr-[5px] text-right font-normal">Power:</th>
            <td className={clsx('py-0 pl-1', sunken)}>44.6W</td>
            <td className={clsx('p-0 text-center', sunken)}>42.9W</td>
            <td className={clsx('p-0 text-center', sunken)}>N/A</td>
            <td className={clsx('p-0 text-center', sunken)}>1.6W</td>
            <td className={clsx('p-0 text-center', sunken)}>N/A</td>
          </tr>
          <tr className="h-6">
            <th scope="row" className="py-0 pr-[5px] text-right font-normal">Tj. Max:</th>
            <td colSpan={2} className={clsx('py-0 pl-1', sunken)}>100ºC</td>
            <th scope="col" className="p-0 text-center font-normal">Min.</th>
            <th scope="col" className="p-0 text-center font-normal">Max.</th>
            <th scope="col" className="p-0 text-center font-normal">Load</th>
          </tr>
          {READINGS.map(([now, min, max, load], i) => (
            <tr key={i} className="h-6">
              <th scope="row" className="py-0 pr-[5px] text-right font-normal">{`Core #${i}:`}</th>
              <td colSpan={2} className={clsx('py-0 pl-1', sunken)}>{`${now}ºC`}</td>
              <td className={clsx('p-0 text-center', sunken)}>{`${min}ºC`}</td>
              <td className={clsx('p-0 text-center', sunken)}>{`${max}ºC`}</td>
              <td className={clsx('p-0 text-center', sunken)}>{`${load}%`}</td>
            </tr>
          ))}
        </tbody>
      </table>
    </fieldset>
  </section>
);

/* ---------- main window ---------- */

const toolButton = 'flex h-11 w-[49px] items-center justify-center rounded border border-[#9a9a9a] bg-black';

export default function App() {
  return (
    <main className="relative bg-black font-['DejaVu_Sans_Condensed','DejaVu_Sans',sans-serif] text-[13px] leading-4 text-white">
      <IconDefs />
      <header className="flex h-[29px] items-center bg-[#202020] pl-[3px]">
        <HwinfoIcon />
        <h1 className="flex-1 pl-1.5 font-['Noto_Sans',sans-serif] text-[14px] text-[#858585]">HWiNFO64 v7.36-4960 - Sensorstatus</h1>
        <div className="flex pr-[5px]">
          <button type="button" aria-label="Minimieren" className="flex w-[58px] justify-center">
            <svg width="12" height="12" viewBox="0 0 12 12" stroke="#7d7d7d"><path d="M0 5.500h12" /></svg>
          </button>
          <button type="button" aria-label="Verkleinern" className="flex w-[58px] justify-center">
            <svg width="12" height="12" viewBox="0 0 12 12" fill="none" stroke="#7d7d7d">
              <rect x=".5" y="2.500" width="9" height="9" rx="1" />
              <path d="M2.500.5H10A1.500 1.500 0 0 1 11.500 2v7.500" />
            </svg>
          </button>
          <button type="button" aria-label="Schließen" className="flex w-[58px] justify-center">
            <svg width="12" height="12" viewBox="0 0 12 12" stroke="#7d7d7d"><path d="M0 0 12 12M12 0 0 12" /></svg>
          </button>
        </div>
      </header>

      <div className="grid grid-cols-4 border-t border-r border-b border-[#333]">
        <SensorPanel rows={parse(COL_1)} first />
        <SensorPanel rows={parse(COL_2)} wide />
        <SensorPanel rows={parse(COL_3)} />
        <SensorPanel rows={parse(COL_4)} />
      </div>

      <footer className="flex gap-[3px] border-b border-[#333] pt-[9px] pb-3.5 pl-px">
        <button type="button" aria-label="Spalten hinzufügen" className={toolButton}>
          <svg width="40" height="22" viewBox="0 0 40 22" fill="url(#arrow)" stroke="#a8b4c0" strokeWidth=".8">
            <path d="M.5 11 10 1v5h9.500v10H10v5z" />
            <path d="M39.500 11 30 1v5h-9v10h9v5z" />
          </svg>
        </button>
        <button type="button" aria-label="Spalten entfernen" className={toolButton}>
          <svg width="40" height="22" viewBox="0 0 40 22" fill="url(#arrow)" stroke="#a8b4c0" strokeWidth=".8">
            <path d="M20 11 10.500 1v5H1v10h9.500v5z" />
            <path d="M20 11 29.500 1v5H39v10h-9.500v5z" />
          </svg>
        </button>
      </footer>

      <CoreTemp />
    </main>
  );
}
